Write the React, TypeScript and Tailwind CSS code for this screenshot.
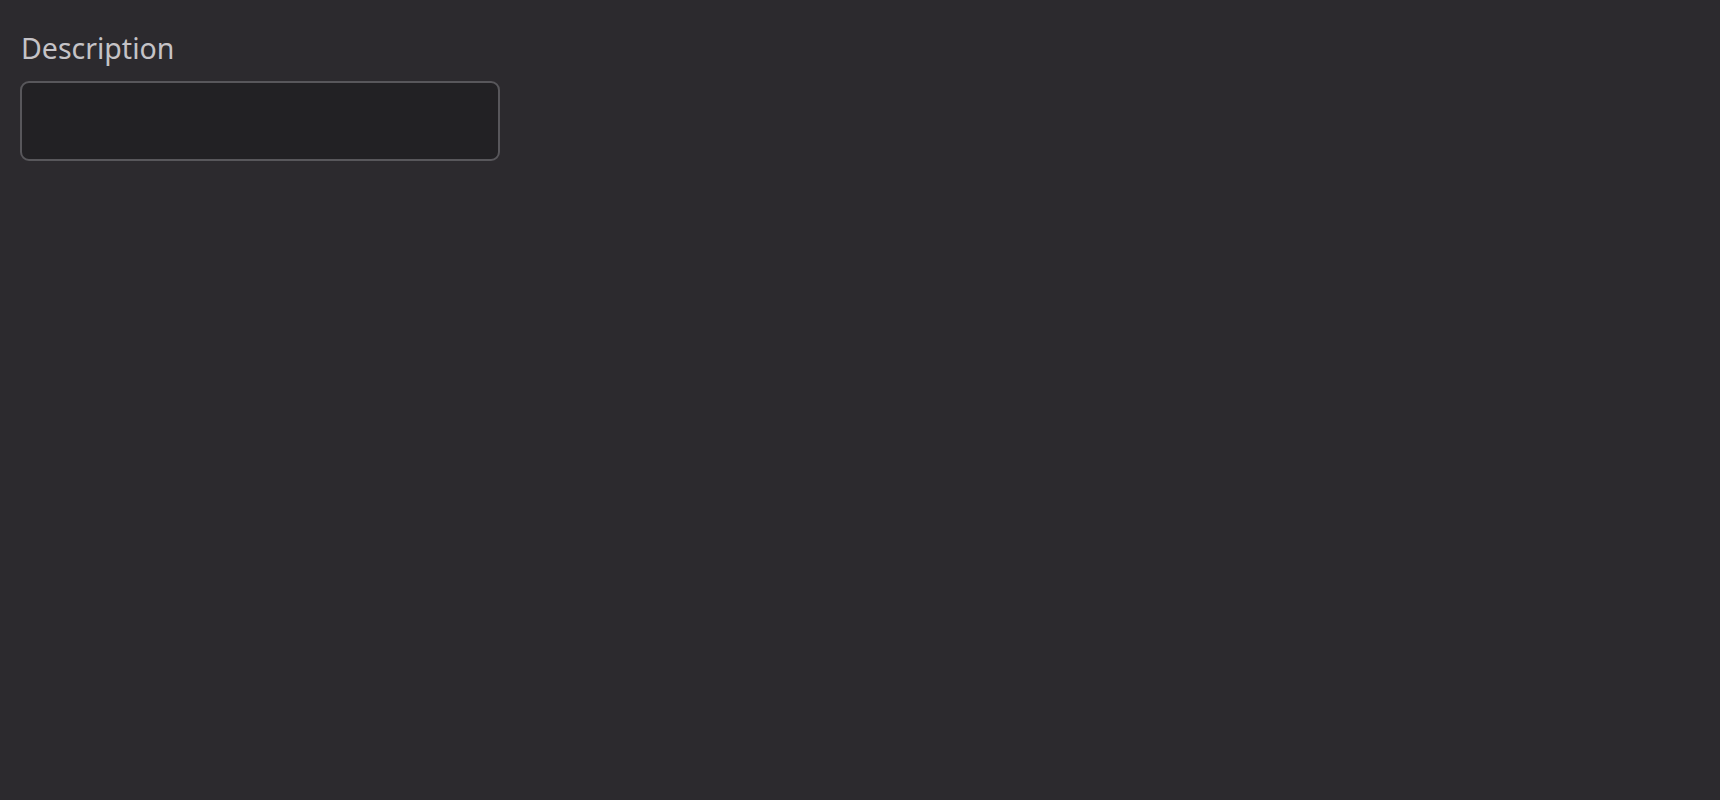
export default function App() {
  return (
    <main className="min-h-screen w-full bg-[#2c2a2e] px-[20px] pt-[28px]" style={{ fontFamily: '"Noto Sans", "Open Sans", sans-serif' }}>
      <label className="flex flex-col gap-[13px]">
        <span className="pl-[1px] text-[28.5px] leading-[40px] text-[#c5c3c7]">Description</span>
        <textarea className="block h-[80px] w-[480px] resize-none rounded-[9px] border-2 border-[#58575b] bg-[#222124] px-3 py-2 text-[#c5c3c7] outline-none" />
      </label>
    </main>
  )
}
